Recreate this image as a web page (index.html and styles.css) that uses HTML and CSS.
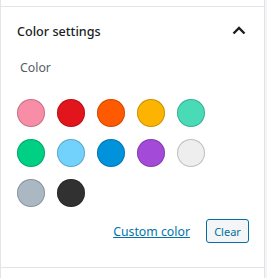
FILE: index.html
```html
<!DOCTYPE html>
<html lang="en">
<head>
    <meta charset="UTF-8">
    <meta name="viewport" content="width=device-width, initial-scale=1.0">
    <title>Color settings</title>
    <link rel="stylesheet" href="styles.css">
</head>
<body>
    <div class="sidebar">
        <div class="panel-prev"></div>

        <div class="panel-body">
            <div class="panel-title">
                <span>Color settings</span>
                <svg class="chevron" width="24" height="24" viewBox="0 0 24 24">
                    <path d="M6.5 14.5 12 9l5.5 5.5" fill="none" stroke="#191e23" stroke-width="2.4"/>
                </svg>
            </div>

            <div class="panel-content">
                <div class="label">Color</div>

                <div class="swatches">
                    <span class="swatch" style="background:#f78da7"></span>
                    <span class="swatch" style="background:#e2141c"></span>
                    <span class="swatch" style="background:#ff5a00"></span>
                    <span class="swatch" style="background:#fcb400"></span>
                    <span class="swatch" style="background:#48dbb5"></span>
                    <span class="swatch" style="background:#00d084"></span>
                    <span class="swatch" style="background:#72d2fc"></span>
                    <span class="swatch" style="background:#0093dc"></span>
                    <span class="swatch" style="background:#a34bd8"></span>
                    <span class="swatch" style="background:#eeeeee"></span>
                    <span class="swatch" style="background:#abb8c3"></span>
                    <span class="swatch" style="background:#313131"></span>
                </div>

                <div class="actions">
                    <a href="#" class="custom-link">Custom color</a>
                    <button class="clear-btn">Clear</button>
                </div>
            </div>
        </div>
    </div>
</body>
</html>
```

FILE: styles.css
```css
body {
    margin: 0;
    background: #fff;
    font-family: "Noto Sans", "Open Sans", sans-serif;
    font-size: 12.3px;
    color: #191e23;
}
.sidebar {
    width: 263px;
    height: 278px;
    border-left: 1px solid #e2e4e7;
    border-right: 1px solid #e2e4e7;
    box-shadow: 2px 0 0 #f3f4f5;
}
.panel-prev {
    height: 6px;
}
.panel-body {
    border-top: 1px solid #e2e4e7;
    border-bottom: 1px solid #e2e4e7;
}
.panel-title {
    height: 48px;
    padding: 0 13px 0 16px;
    display: flex;
    align-items: center;
    justify-content: space-between;
    font-size: 12.6px;
    font-weight: 500;
}
.chevron {
    display: block;
}
.panel-content {
    padding: 3px 15px 24px 16px;
}
.label {
    line-height: 20px;
    color: #555d66;
    padding-left: 3px;
}
.swatches {
    display: grid;
    grid-template-columns: repeat(5, 28px);
    gap: 12px;
    margin-top: 21px;
}
.swatch {
    width: 28px;
    height: 28px;
    border-radius: 50%;
    box-shadow: inset 0 0 0 1px rgba(0,0,0,0.2);
}
.actions {
    display: flex;
    justify-content: flex-end;
    align-items: center;
    margin-top: 12px;
    gap: 16px;
}
.custom-link {
    color: #0073aa;
    text-decoration: underline;
}
.clear-btn {
    height: 24px;
    width: 43px;
    padding: 0;
    font-family: inherit;
    font-size: 11px;
    color: #0071a1;
    background: #f3f5f6;
    border: 1px solid #0071a1;
    border-radius: 3px;
}
```
